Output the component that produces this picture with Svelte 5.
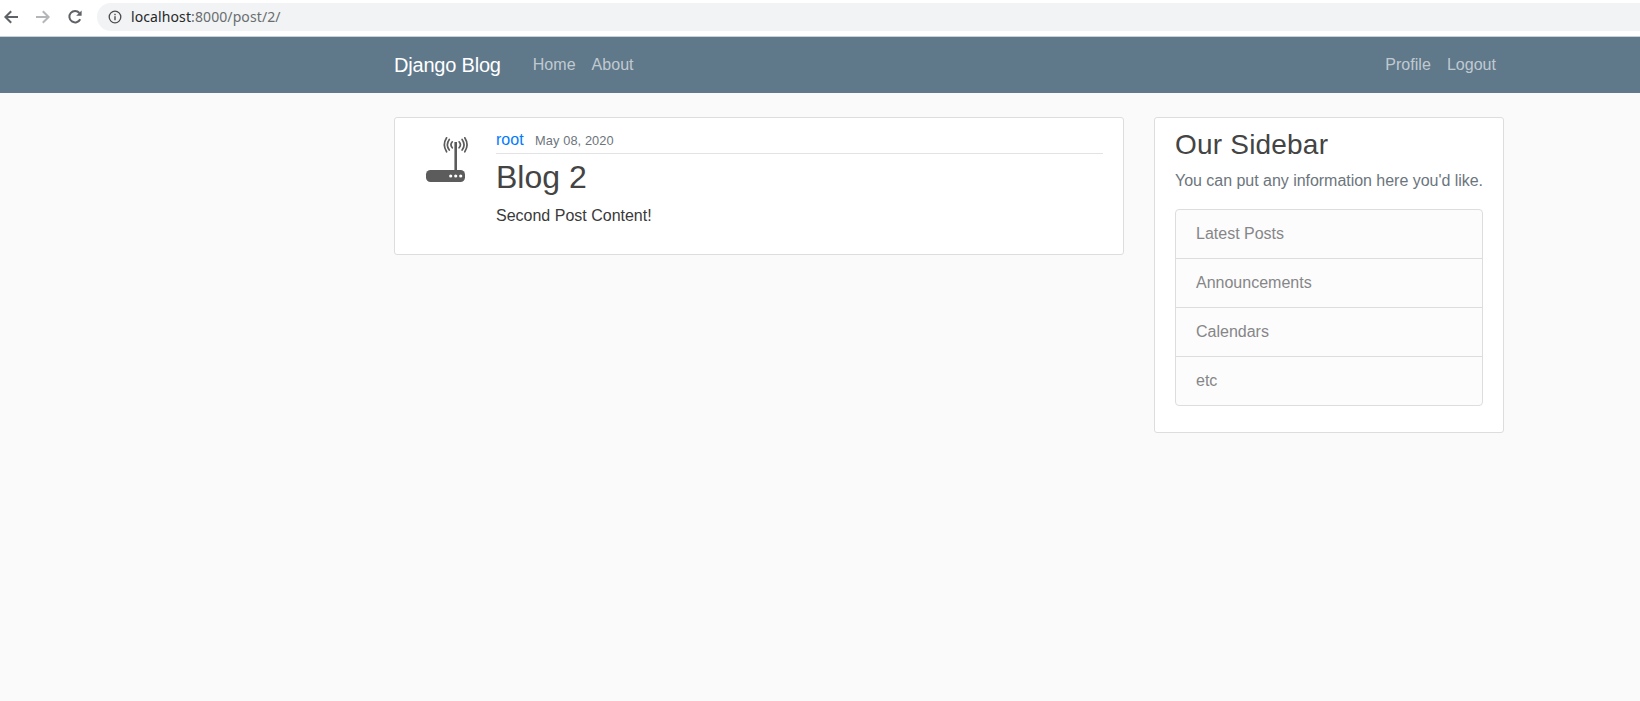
<script>
  const items = ['Latest Posts', 'Announcements', 'Calendars', 'etc'];
</script>

<div class="page">
  <div class="chrome">
    <div class="navbtns">
      <svg class="nb" viewBox="0 0 16 16"><path d="M15 8H2.500M8.200 2.200 2.400 8l5.800 5.800" fill="none" stroke="#5f6368" stroke-width="2"/></svg>
      <svg class="nb" viewBox="0 0 16 16"><path d="M1 8h12.500M7.800 2.200 13.600 8l-5.800 5.800" fill="none" stroke="#b4b6b8" stroke-width="2"/></svg>
      <svg class="nb" viewBox="0 0 16 16"><path d="M13.200 10.200A5.700 5.700 0 1 1 12.400 4" fill="none" stroke="#5f6368" stroke-width="2"/><path d="M14.600 1.400v5.400H9.200z" fill="#5f6368"/></svg>
    </div>
    <div class="omnibox">
      <svg class="info" viewBox="0 0 14 14"><circle cx="7" cy="7" r="5.800" fill="none" stroke="#4a4d50" stroke-width="1.300"/><rect x="6.300" y="6.200" width="1.400" height="4" fill="#4a4d50"/><rect x="6.300" y="3.800" width="1.400" height="1.400" fill="#4a4d50"/></svg>
      <span class="url"><span class="host">localhost</span>:8000/post/2/</span>
    </div>
  </div>

  <header class="navbar">
    <div class="container nav-inner">
      <a class="brand" href="#top">Django Blog</a>
      <nav class="links"><a href="#top">Home</a><a href="#top">About</a></nav>
      <nav class="links right"><a href="#top">Profile</a><a href="#top">Logout</a></nav>
    </div>
  </header>

  <main class="container main">
    <article class="section post">
      <svg class="avatar" viewBox="0 0 65 65" role="img" aria-label="avatar">
        <g fill="none" stroke="#5c5c5c" stroke-linecap="round">
          <path d="M40.700 14v28" stroke-width="2.600" stroke-linecap="butt"/>
          <path d="M37.300 13.800a4.500 4.500 0 0 0 0 6M44.100 13.800a4.500 4.500 0 0 1 0 6" stroke-width="1.700"/>
          <path d="M34.300 11.500a9 9 0 0 0 0 10.600M47.100 11.500a9 9 0 0 1 0 10.600" stroke-width="1.700"/>
          <path d="M31.600 9.800a13 13 0 0 0 0 14M49.800 9.800a13 13 0 0 1 0 14" stroke-width="1.700"/>
        </g>
        <rect x="11" y="42" width="39" height="12" rx="4.500" fill="#5c5c5c"/>
        <circle cx="35.700" cy="48" r="1.600" fill="#fff"/><circle cx="40.700" cy="48" r="1.600" fill="#fff"/><circle cx="45.700" cy="48" r="1.600" fill="#fff"/>
      </svg>
      <div class="media-body">
        <div class="meta">
          <a class="author" href="#top">root</a>
          <small class="date">May 08, 2020</small>
        </div>
        <h2 class="title">Blog 2</h2>
        <p class="content">Second Post Content!</p>
      </div>
    </article>

    <aside class="section side">
      <h3 class="side-title">Our Sidebar</h3>
      <p class="muted">You can put any information here you'd like.</p>
      <ul class="list">
        {#each items as item}
          <li>{item}</li>
        {/each}
      </ul>
    </aside>
  </main>
</div>

<style>
  :global(body) { margin: 0; background: #fafafa; }
  * { box-sizing: border-box; }
  .page {
    width: 1640px; height: 701px; overflow: hidden; background: #fafafa; color: #333;
    font-family: "Liberation Sans", Arial, sans-serif; font-size: 16px; line-height: 1.5;
  }
  a { text-decoration: none; }

  .chrome { height: 36px; background: #fff; display: flex; align-items: flex-start; padding-top: 3px; }
  .navbtns { display: flex; width: 97px; padding: 6px 0 0 3px; gap: 16px; flex: none; }
  .nb { width: 16px; height: 16px; flex: none; }
  .omnibox {
    flex: 1; height: 28px; margin-right: -20px; background: #f1f3f4; border-radius: 14px 0 0 14px;
    display: flex; align-items: center; padding-left: 11px; gap: 8px;
  }
  .info { width: 14px; height: 14px; flex: none; }
  .url { font-family: "Noto Sans", sans-serif; font-size: 14px; letter-spacing: 0.1px; color: #6a6d70; line-height: 1; margin-left: 1px; }
  .host { color: #26282a; }

  .container { width: 1140px; margin-left: 379px; padding: 0 15px; }
  .navbar { height: 57px; background: #5f788a; border-top: 1px solid #c9d0d6; }
  .nav-inner { display: flex; align-items: center; height: 100%; padding-bottom: 1px; }
  .brand { color: #fff; font-size: 20px; letter-spacing: -0.2px; margin-right: 24px; line-height: 30px; }
  .links { display: flex; }
  .links a { color: rgba(255,255,255,.62); padding: 8px; line-height: 24px; letter-spacing: 0.03px; }
  .right { margin-left: auto; }

  .main { display: flex; align-items: flex-start; gap: 30px; padding-top: 24px; }
  .section { background: #fff; border: 1px solid #ddd; border-radius: 3px; padding: 10px 20px; }
  .post { width: 730px; display: flex; height: 138px; }
  .avatar { width: 65px; height: 65px; flex: none; margin-right: 16px; }
  .media-body { flex: 1; min-width: 0; }
  .meta { border-bottom: 1px solid #e3e3e3; padding-bottom: 1px; margin-bottom: 4px; line-height: 24px; height: 26px; }
  .author { color: #007bff; margin-right: 7px; }
  .date { color: #6c757d; font-size: 80%; letter-spacing: 0.1px; }
  .title { margin: 0 0 8px; font-size: 32px; line-height: 38.4px; color: #444; font-weight: 400; }
  .content { margin: 0 0 16px; color: #3a3a3a; }

  .side { width: 350px; }
  .side-title { margin: 0 0 8px; font-size: 28px; font-weight: 400; line-height: 33.6px; letter-spacing: 0.2px; color: #444; }
  .muted { margin: -1px 0 16px; color: #6c757d; white-space: nowrap; letter-spacing: -0.03px; }
  .list { list-style: none; margin: 0 0 16px; padding: 0; background: #fcfcfc; border: 1px solid #ddd; border-radius: 4px; }
  .list li { padding: 12px 20px; height: 49px; line-height: 24px; color: #868688; border-top: 1px solid #ddd; }
  .list li:first-child { border-top: 0; height: 48px; }
</style>
